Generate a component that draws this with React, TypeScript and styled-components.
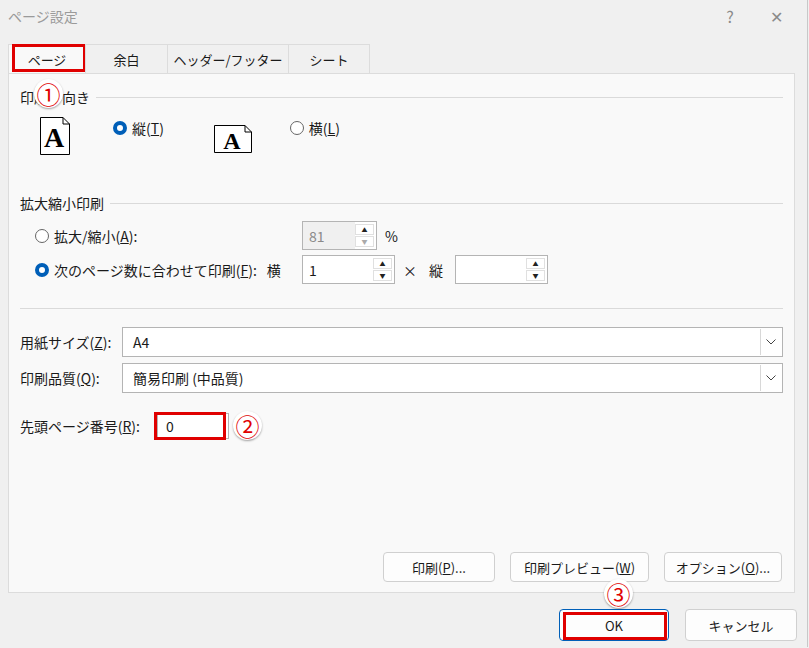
import React from "react";
import styled, { createGlobalStyle } from "styled-components";

const G = createGlobalStyle`
  html,body{margin:0;padding:0;background:#f0f0f0;}
  body{font-family:"Noto Sans CJK JP","Noto Sans",sans-serif;font-size:14px;color:#1a1a1a;}
`;
const Win = styled.div`width:807px;height:647px;background:#f0f0f0;border-right:1px solid #c8c8c8;display:flex;flex-direction:column;position:relative;`;
const Title = styled.div`height:32px;display:flex;align-items:center;padding:0 0 0 8px;color:#9a9a9a;font-size:14px;`;
const TitleText = styled.div`flex:1;`;
const TBtn = styled.div`width:46px;height:32px;display:flex;align-items:center;justify-content:center;color:#8a8a8a;font-size:16px;`;
const Tabs = styled.div`display:flex;margin:12px 0 0 8px;height:29px;`;
const Tab = styled.div<{ $w: number; $sel?: boolean }>`
  width:${p => p.$w}px;display:flex;align-items:center;justify-content:center;font-size:13px;
  background:${p => (p.$sel ? "#f9f9f9" : "#f0f0f0")};border:1px solid #dcdcdc;border-bottom:none;margin-right:-1px;
  position:relative;
`;
const RedBox = styled.div`position:absolute;border:3px solid #e00000;pointer-events:none;`;
const Panel = styled.div`margin:0 12px 0 8px;height:518px;background:#f9f9f9;border:1px solid #dcdcdc;padding:0 11px 0 11px;display:flex;flex-direction:column;position:relative;`;
const Line = styled.div`flex:1;height:1px;background:#dadada;`;
const Row = styled.div<{ $t?: number; $l?: number }>`display:flex;align-items:center;margin-top:${p => p.$t ?? 0}px;padding-left:${p => p.$l ?? 0}px;`;
const Radio = styled.span<{ $on?: boolean }>`
  width:14px;height:14px;border-radius:50%;box-sizing:border-box;margin-right:5px;display:inline-block;
  border:${p => (p.$on ? "4px solid #005fb8" : "1px solid #666")};background:#fff;
`;
const U = styled.span`text-decoration:underline;`;
const Spin = styled.div<{ $w: number; $dis?: boolean }>`
  width:${p => p.$w}px;height:29px;box-sizing:border-box;border:1px solid #b4b4b4;background:${p => (p.$dis ? "#f0f0f0" : "#fff")};
  display:flex;color:${p => (p.$dis ? "#8a8a8a" : "#1a1a1a")};
`;
const SpinVal = styled.div`flex:1;padding-left:6px;display:flex;align-items:center;font-size:14px;`;
const SpinBtns = styled.div<{ $dis?: boolean }>`width:19px;display:flex;flex-direction:column;padding:2px 2px 2px 0;gap:1px;background:#fff;`;
const SpinB = styled.div<{ $dis?: boolean }>`flex:1;background:#fff;border:1px solid #e0e0e0;display:flex;align-items:center;justify-content:center;font-size:6px;color:${p => (p.$dis ? "#aaa" : "#222")};`;
const Select = styled.div`flex:1;height:30px;box-sizing:border-box;border:1px solid #b4b4b4;background:#fff;display:flex;align-items:center;padding-left:10px;`;
const SelArrow = styled.div`width:20px;height:26px;margin-left:auto;margin-right:1px;border-left:1px solid #d8d8d8;display:flex;align-items:center;justify-content:center;`;
const Label = styled.div<{ $w?: number }>`width:${p => (p.$w ? p.$w + "px" : "auto")};`;
const Btn = styled.div<{ $w: number }>`
  width:${p => p.$w}px;height:30px;box-sizing:border-box;border:1px solid #d0d0d0;border-radius:4px;background:#fdfdfd;
  display:flex;align-items:center;justify-content:center;font-size:13px;position:relative;
`;
const Circle = styled.div`position:absolute;width:29px;height:29px;border-radius:50%;background:#fff;box-shadow:0 1px 2px rgba(0,0,0,.35);
  color:#e00000;font-size:24px;display:flex;align-items:center;justify-content:center;line-height:1;`;
const NumBox = styled.div`position:relative;width:72px;height:26px;border:1px solid #b4b4b4;background:#fff;box-sizing:border-box;padding-left:8px;display:flex;align-items:center;`;
const Page = ({ land }: { land?: boolean }) => {
  const w = land ? 38 : 30, h = land ? 28 : 38;
  return (
    <svg width={w} height={h} viewBox={`0 0 ${w} ${h}`}>
      <path d={`M0.5 0.5 H${w - 7} L${w - 0.5} 7 V${h - 0.5} H0.5 Z`} fill="#fff" stroke="#000" />
      <path d={`M${w - 7} 0.5 V7 H${w - 0.5}`} fill="none" stroke="#000" />
      <text x={w / 2 - 1} y={h - (land ? 4 : 8)} textAnchor="middle" fontFamily="Liberation Serif" fontWeight="bold" fontSize={land ? 24 : 28}>A</text>
    </svg>
  );
};
const Arrow = () => <svg width="10" height="6"><path d="M0.5 0.5 L5 5 L9.5 0.5" fill="none" stroke="#444" /></svg>;

export default function App() {
  return (
    <>
      <G />
      <Win>
        <Title><TitleText>ページ設定</TitleText><TBtn>?</TBtn><TBtn style={{ marginRight: 8 }}>✕</TBtn></Title>
        <Tabs>
          <Tab $w={76} $sel>ページ<RedBox style={{ left: 3, top: -1, width: 68, height: 22 }} /></Tab>
          <Tab $w={81}>余白</Tab>
          <Tab $w={120}>ヘッダー/フッター</Tab>
          <Tab $w={80}>シート</Tab>
        </Tabs>
        <Panel>
          <Circle style={{ left: 25, top: 5 }}>①</Circle>
          <Row $t={13}><Label>印刷の向き</Label><Line style={{ marginLeft: 6 }} /></Row>
          <Row $t={8} $l={20}>
            <Page />
            <Row style={{ marginLeft: 43, marginTop: -16 }}><Radio $on />縦(<U>T</U>)</Row>
            <span style={{ marginLeft: 50, marginTop: 10 }}><Page land /></span>
            <Row style={{ marginLeft: 38, marginTop: -16 }}><Radio />横(<U>L</U>)</Row>
          </Row>
          <Row $t={36}><Label>拡大縮小印刷</Label><Line style={{ marginLeft: 6 }} /></Row>
          <Row $t={8} $l={15}>
            <Label $w={267}><Row><Radio />拡大/縮小(<U>A</U>):</Row></Label>
            <Spin $w={75} $dis><SpinVal>81</SpinVal><SpinBtns><SpinB>▲</SpinB><SpinB $dis>▼</SpinB></SpinBtns></Spin>
            <span style={{ marginLeft: 8 }}>%</span>
          </Row>
          <Row $t={5} $l={15}>
            <Label $w={267}><Row><Radio $on />次のページ数に合わせて印刷(<U>F</U>):<span style={{ marginLeft: 10 }}>横</span></Row></Label>
            <Spin $w={93}><SpinVal>1</SpinVal><SpinBtns><SpinB>▲</SpinB><SpinB>▼</SpinB></SpinBtns></Spin>
            <span style={{ margin: "0 12px 0 8px" }}>×</span><span>縦</span>
            <Spin $w={93} style={{ marginLeft: 12 }}><SpinVal /><SpinBtns><SpinB>▲</SpinB><SpinB>▼</SpinB></SpinBtns></Spin>
          </Row>
          <Row $t={24}><Line /></Row>
          <Row $t={18}><Label $w={102}>用紙サイズ(<U>Z</U>):</Label><Select>A4<SelArrow><Arrow /></SelArrow></Select></Row>
          <Row $t={6}><Label $w={102}>印刷品質(<U>Q</U>):</Label><Select>簡易印刷 (中品質)<SelArrow><Arrow /></SelArrow></Select></Row>
          <Row $t={18}>
            <Label $w={137}>先頭ページ番号(<U>R</U>):</Label>
            <NumBox>0<RedBox style={{ left: -4, top: -2, width: 66, height: 22 }} /></NumBox>
            <Circle style={{ position: "static", marginLeft: 4 }}>②</Circle>
          </Row>
          <Row $t={112} style={{ justifyContent: "flex-end", gap: 15, paddingRight: 1 }}>
            <Btn $w={112}>印刷(<U>P</U>)...</Btn>
            <Btn $w={139}>印刷プレビュー(<U>W</U>)</Btn>
            <Btn $w={118}>オプション(<U>O</U>)...</Btn>
          </Row>
        </Panel>
        <Row $t={16} style={{ justifyContent: "flex-end", gap: 16, paddingRight: 10 }}>
          <Btn $w={110} style={{ border: "1px solid #005fb8", height: 32 }}>
            OK<RedBox style={{ left: 3, top: 2, width: 98, height: 22 }} />
            <Circle style={{ left: 44, top: -31 }}>③</Circle>
          </Btn>
          <Btn $w={112} style={{ height: 32 }}>キャンセル</Btn>
        </Row>
      </Win>
    </>
  );
}
